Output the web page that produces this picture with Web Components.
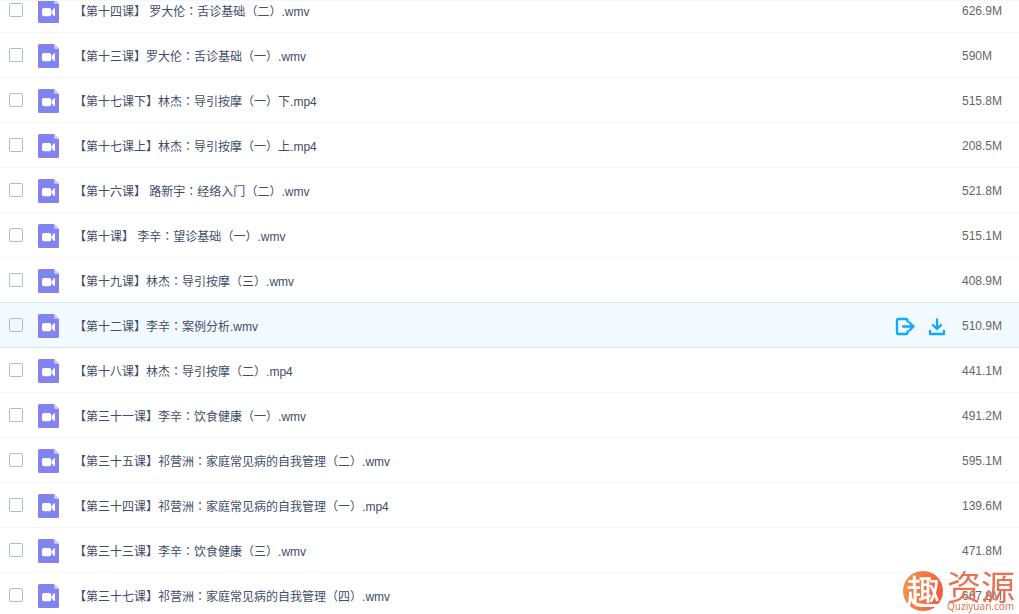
<!DOCTYPE html>
<html lang="zh-CN">
<head>
<meta charset="utf-8">
<title>文件列表</title>
<style>
body { margin: 0; background: #fff; font: 12px/18px "Liberation Sans", "Noto Sans CJK SC", sans-serif; color: #424e67; }
</style>
</head>
<body>
<file-list></file-list>
<site-mark></site-mark>

<template id="row-template">
<style>
:host { display: flex; align-items: center; box-sizing: border-box; height: 45px; padding-left: 9px; border-bottom: 1px solid #f2f6fd; }
:host([active]) { background: #f3faff; border-bottom-color: #cfe8fa; }
:host([before-active]) { border-bottom-color: #cfe8fa; }
input { appearance: none; box-sizing: border-box; flex: none; width: 14px; height: 14px; margin: 0; border: 1px solid #aebccd; border-radius: 2px; background: none; }
label { display: flex; align-items: center; flex: 1; min-width: 0; padding-left: 15px; gap: 15px; }
.doc { flex: none; width: 21px; height: 24px; margin-top: 2px; }
.name, .size { padding-top: 2px; white-space: nowrap; }
.wide { font-family: "Noto Sans CJK TC", sans-serif; }
.actions { display: none; gap: 12px; padding: 3px 15px 0 0; }
:host([active]) .actions { display: flex; }
button { display: block; width: 20px; height: 20px; padding: 0; border: 0; background: none; }
button svg { display: block; }
.size { flex: none; width: 57px; color: #666; }
</style>
<input type="checkbox" id="pick">
<label for="pick">
  <svg class="doc" viewBox="0 0 21 24" aria-hidden="true">
    <path d="M1.500 0H16L21 5V22.500Q21 24 19.500 24H1.500Q0 24 0 22.500V1.500Q0 0 1.500 0Z" fill="#8283f0"/>
    <path d="M16 0L21 5H17.500Q16 5 16 3.500Z" fill="#c4c5fa"/>
    <rect x="4" y="9" width="9.300" height="8.300" rx="2" fill="#fff"/>
    <path d="M13.800 12.200L16 9.300H17V17H16L13.800 14.200Z" fill="#fff"/>
  </svg>
  <span class="name"></span>
</label>
<div class="actions">
  <button type="button" aria-label="分享"><svg width="20" height="20" viewBox="0 0 20 20" fill="none" stroke="#09aaff" stroke-width="2.300" stroke-linecap="round" stroke-linejoin="round"><path d="M12.500 4.500V3.500Q12.500 2 11 2H3.500Q2 2 2 3.500V15.500Q2 17 3.500 17H11Q12.500 17 12.500 15.500V14.500M8 9.500H18M14.500 5.500L18.500 9.500L14.500 13.500"/></svg></button>
  <button type="button" aria-label="下载"><svg width="20" height="20" viewBox="0 0 20 20" fill="none" stroke="#09aaff" stroke-width="2.300" stroke-linecap="round" stroke-linejoin="round"><path d="M10 2.500V12M6 8L10 12L14 8M3 14V17H17V14"/></svg></button>
</div>
<span class="size"></span>
</template>

<template id="list-template">
<style>
:host { display: block; height: 100vh; overflow: hidden; box-sizing: border-box; border-top: 1px solid #f2f6fd; }
.rows { margin-top: -13px; }
</style>
<div class="rows"></div>
</template>

<template id="mark-template">
<style>
:host { position: fixed; right: 4px; bottom: 3px; display: flex; align-items: center; gap: 4px; color: #ee7053; pointer-events: none; }
.disc { display: grid; place-items: center; width: 40px; height: 40px; border-radius: 50%; background: linear-gradient(100deg, #f5964b, #f0583f); color: #fff; font: 500 34px/40px "Noto Sans CJK SC", sans-serif; }
.words { display: block; }
.big { display: block; font: 34px/30px "Noto Sans CJK SC", sans-serif; }
.url { display: block; font: 10px/10px "Noto Sans", sans-serif; }
</style>
<span class="disc">趣</span>
<span class="words"><span class="big">资源</span><span class="url">Quziyuan.com</span></span>
</template>

<script>
const files = [
  ["【第十四课】 罗大伦：舌诊基础（二）.wmv", "626.9M"],
  ["【第十三课】罗大伦：舌诊基础（一）.wmv", "590M"],
  ["【第十七课下】林杰：导引按摩（一）下.mp4", "515.8M"],
  ["【第十七课上】林杰：导引按摩（一）上.mp4", "208.5M"],
  ["【第十六课】 路新宇：经络入门（二）.wmv", "521.8M"],
  ["【第十课】 李辛：望诊基础（一）.wmv", "515.1M"],
  ["【第十九课】林杰：导引按摩（三）.wmv", "408.9M"],
  ["【第十二课】李辛：案例分析.wmv", "510.9M"],
  ["【第十八课】林杰：导引按摩（二）.mp4", "441.1M"],
  ["【第三十一课】李辛：饮食健康（一）.wmv", "491.2M"],
  ["【第三十五课】祁营洲：家庭常见病的自我管理（二）.wmv", "595.1M"],
  ["【第三十四课】祁营洲：家庭常见病的自我管理（一）.mp4", "139.6M"],
  ["【第三十三课】李辛：饮食健康（三）.wmv", "471.8M"],
  ["【第三十七课】祁营洲：家庭常见病的自我管理（四）.wmv", "667.8M"]
];
const activeIndex = 7;

function mount(host, id) {
  const root = host.attachShadow({ mode: "open" });
  root.append(document.getElementById(id).content.cloneNode(true));
  return root;
}

customElements.define("file-row", class extends HTMLElement {
  connectedCallback() {
    if (this.shadowRoot) return;
    const root = mount(this, "row-template");
    const name = root.querySelector(".name");
    // Full-width colons and brackets use the face that centres them in their cell.
    for (const part of this.getAttribute("name").split(/([：（）])/)) {
      if (/^[：（）]$/.test(part)) {
        const span = document.createElement("span");
        span.className = "wide";
        span.lang = "zh-TW";
        span.textContent = part;
        name.append(span);
      } else {
        name.append(part);
      }
    }
    root.querySelector(".size").textContent = this.getAttribute("size");
  }
});

customElements.define("file-list", class extends HTMLElement {
  connectedCallback() {
    if (this.shadowRoot) return;
    const rows = mount(this, "list-template").querySelector(".rows");
    files.forEach(([name, size], i) => {
      const row = document.createElement("file-row");
      row.setAttribute("name", name);
      row.setAttribute("size", size);
      row.toggleAttribute("active", i === activeIndex);
      row.toggleAttribute("before-active", i === activeIndex - 1);
      rows.append(row);
    });
  }
});

customElements.define("site-mark", class extends HTMLElement {
  connectedCallback() {
    if (!this.shadowRoot) mount(this, "mark-template");
  }
});
</script>
</body>
</html>
